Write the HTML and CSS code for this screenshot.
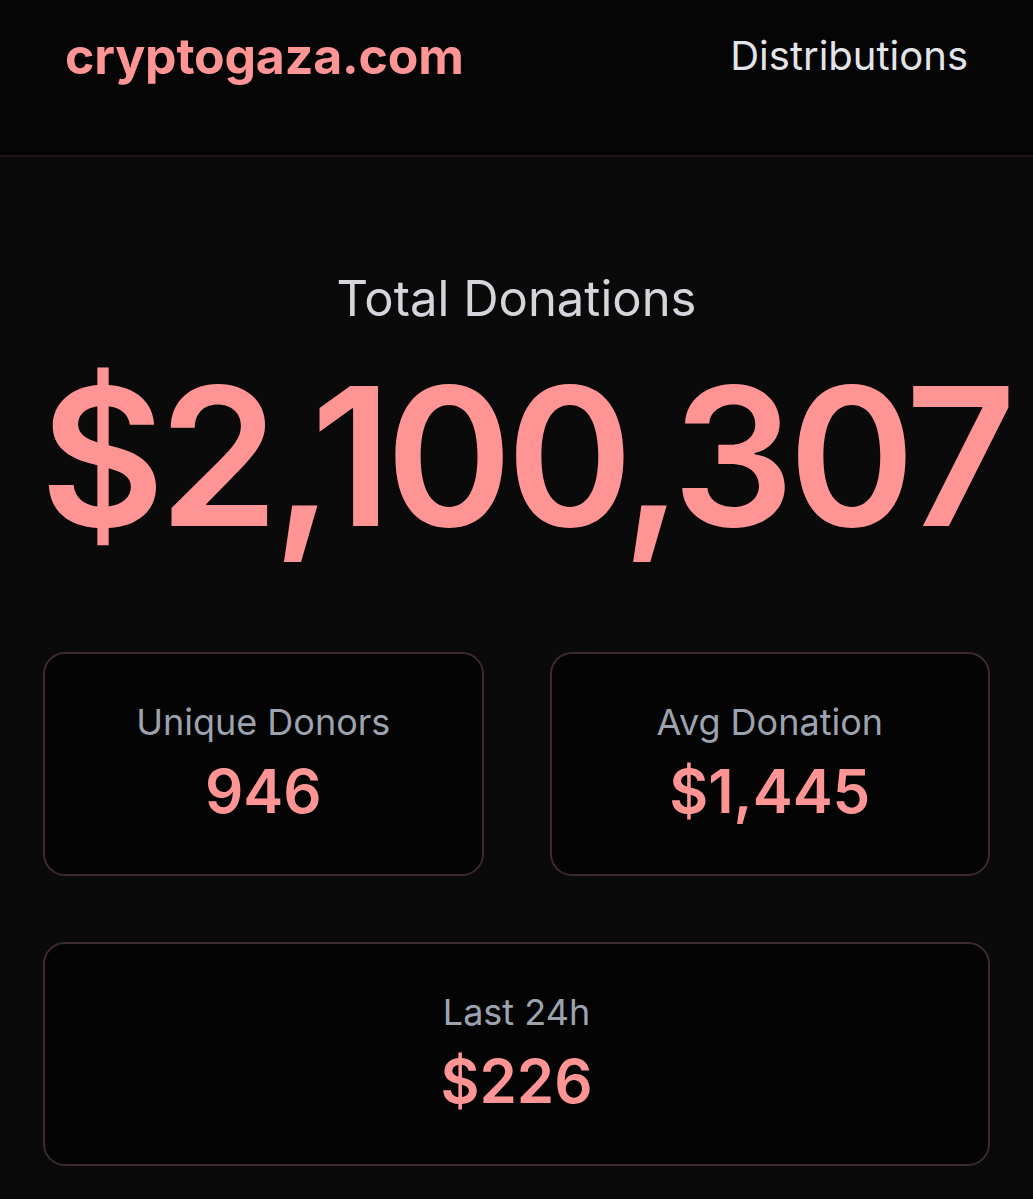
FILE: index.html
```html
<!DOCTYPE html>
<html lang="en">
<head>
<meta charset="utf-8">
<title>cryptogaza.com</title>
<link rel="stylesheet" href="styles.css">
</head>
<body>
<header class="site-header">
  <a class="logo" href="#">cryptogaza.com</a>
  <nav class="nav"><a href="#">Distributions</a></nav>
</header>
<main class="main">
  <section class="hero">
    <h2 class="hero-label">Total Donations</h2>
    <div class="hero-value">$2,100,307</div>
  </section>
  <section class="stats">
    <div class="card">
      <div class="card-label">Unique Donors</div>
      <div class="card-value">946</div>
    </div>
    <div class="card">
      <div class="card-label">Avg Donation</div>
      <div class="card-value">$1,445</div>
    </div>
    <div class="card card-wide">
      <div class="card-label">Last 24h</div>
      <div class="card-value">$226</div>
    </div>
  </section>
</main>
</body>
</html>
```
FILE: styles.css
```css
* { box-sizing: border-box; }
html, body { margin: 0; padding: 0; }
body {
  background: #0a0a0a;
  font-family: Inter, "Noto Sans", "Liberation Sans", sans-serif;
  color: #e5e7eb;
}
a { text-decoration: none; color: inherit; }

.site-header {
  height: 157px;
  background: #050505;
  border-bottom: 2px solid #1e1515;
  display: flex;
  justify-content: space-between;
  align-items: flex-start;
  padding: 26px 65px 0 65px;
}
.logo {
  color: #ff9494;
  font-size: 50px;
  font-weight: 700;
  letter-spacing: -0.2px;
  line-height: 60px;
}
.nav a {
  color: #e3e4e8;
  font-size: 40px;
  font-weight: 400;
  line-height: 60px;
}

.main { padding: 0 43px; }
.hero { text-align: center; padding-top: 112px; }
.hero-label {
  margin: 0;
  font-size: 49px;
  font-weight: 400;
  color: #d4d6db;
  line-height: 60px;
}
.hero-value {
  margin: 22px -20px 0 -3px;
  font-size: 192px;
  font-weight: 600;
  color: #ff9494;
  letter-spacing: -6px;
  line-height: 210px;
  white-space: nowrap;
}

.stats {
  margin-top: 91px;
  display: grid;
  grid-template-columns: 1fr 1fr;
  gap: 66px;
}
.card {
  height: 224px;
  background: #040404;
  border: 2px solid #3d2b2b;
  border-radius: 22px;
  display: flex;
  flex-direction: column;
  align-items: center;
  justify-content: center;
  padding-bottom: 6px;
}
.card-wide { grid-column: 1 / -1; }
.card-label {
  font-size: 36px;
  color: #9ca3af;
  line-height: 44px;
}
.card-value {
  margin-top: 15px;
  font-size: 60px;
  font-weight: 600;
  color: #ff9494;
  line-height: 64px;
}
```
